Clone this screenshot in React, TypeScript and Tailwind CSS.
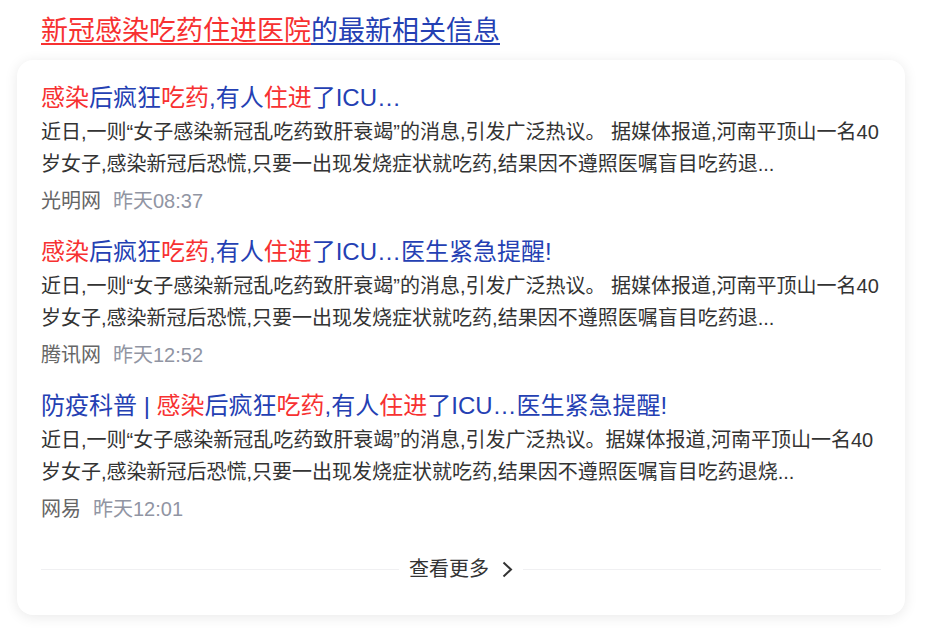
type Part = { t: string; red?: boolean };

interface NewsItem {
  title: Part[];
  body: string[];
  source: string;
  time: string;
}

const BODY_A = "近日,一则“女子感染新冠乱吃药致肝衰竭”的消息,引发广泛热议。 据媒体报道,河南平顶山一名40";
const BODY_B = "岁女子,感染新冠后恐慌,只要一出现发烧症状就吃药,结果因不遵照医嘱盲目吃药退...";

const ITEMS: NewsItem[] = [
  {
    title: [
      { t: "感染", red: true },
      { t: "后疯狂" },
      { t: "吃药", red: true },
      { t: ",有人" },
      { t: "住进", red: true },
      { t: "了ICU…" },
    ],
    body: [BODY_A, BODY_B],
    source: "光明网",
    time: "昨天08:37",
  },
  {
    title: [
      { t: "感染", red: true },
      { t: "后疯狂" },
      { t: "吃药", red: true },
      { t: ",有人" },
      { t: "住进", red: true },
      { t: "了ICU…医生紧急提醒!" },
    ],
    body: [BODY_A, BODY_B],
    source: "腾讯网",
    time: "昨天12:52",
  },
  {
    title: [
      { t: "防疫科普 | " },
      { t: "感染", red: true },
      { t: "后疯狂" },
      { t: "吃药", red: true },
      { t: ",有人" },
      { t: "住进", red: true },
      { t: "了ICU…医生紧急提醒!" },
    ],
    body: [
      "近日,一则“女子感染新冠乱吃药致肝衰竭”的消息,引发广泛热议。据媒体报道,河南平顶山一名40",
      "岁女子,感染新冠后恐慌,只要一出现发烧症状就吃药,结果因不遵照医嘱盲目吃药退烧...",
    ],
    source: "网易",
    time: "昨天12:01",
  },
];

export default function App() {
  return (
    <div
      className="min-h-screen bg-white"
      style={{ fontFamily: '"Liberation Sans", Arial, "Noto Sans CJK SC", sans-serif' }}
    >
      <div className="pt-[13px] pl-[41px]">
        <a className="text-[27px] leading-[36px] whitespace-nowrap">
          <span className="text-[#f73131] underline underline-offset-[3px] decoration-[2px]">
            新冠感染吃药住进医院
          </span>
          <span className="text-[#2440b3] underline underline-offset-[3px] decoration-[2px]">
            的最新相关信息
          </span>
        </a>
      </div>

      <div className="mt-[11px] ml-[17px] w-[888px] rounded-2xl bg-white px-6 pt-5 pb-[30px] shadow-[0_2px_14px_rgba(0,0,0,0.09)]">
        {ITEMS.map((item, i) => (
          <div key={i} className="mb-[17px]">
            <div className="text-[24px] leading-[36px] text-[#2440b3] whitespace-nowrap">
              {item.title.map((p, j) => (
                <span key={j} className={p.red ? "text-[#f73131]" : ""}>
                  {p.t}
                </span>
              ))}
            </div>
            <div className="text-[20px] leading-[32px] text-[#333]">
              {item.body.map((line, j) => (
                <div key={j} className="whitespace-nowrap">
                  {line}
                </div>
              ))}
            </div>
            <div className="mt-[5px] flex text-[20px] leading-[32px]">
              <span className="text-[#666]">{item.source}</span>
              <span className="ml-3 text-[#9195a3]">{item.time}</span>
            </div>
          </div>
        ))}

        <div className="mt-[28px] flex items-center">
          <div className="h-px flex-1 bg-[#f0f0f2]" />
          <div className="mx-[10px] flex items-center text-[20px] leading-[32px] text-[#333]">
            <span>查看更多</span>
            <svg width="11" height="17" viewBox="0 0 11 17" className="ml-[13px]">
              <path d="M1.5 1.5 L9 8.5 L1.5 15.5" fill="none" stroke="#333" strokeWidth="2" />
            </svg>
          </div>
          <div className="h-px flex-1 bg-[#f0f0f2]" />
        </div>
      </div>
    </div>
  );
}
